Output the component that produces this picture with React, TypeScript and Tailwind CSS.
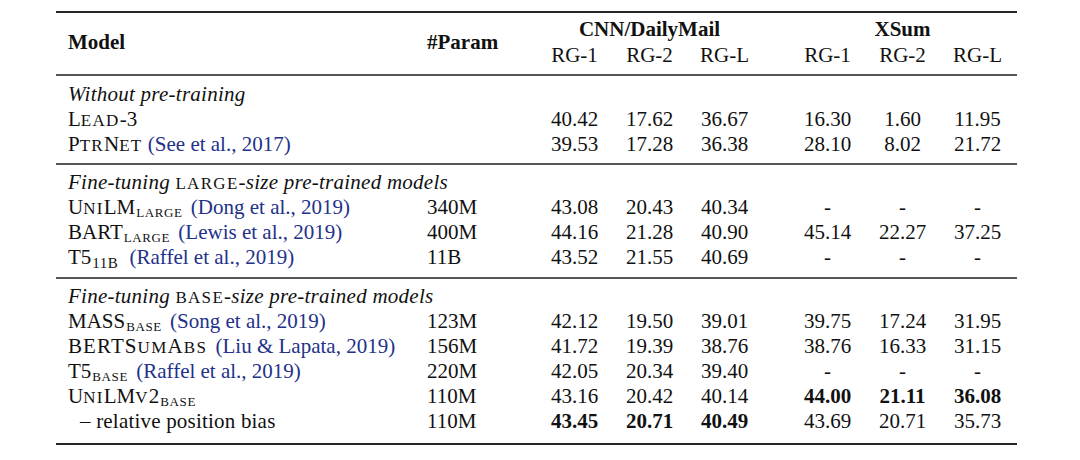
import type { ReactNode } from "react";

// small caps: lowercase runs become smaller uppercase letters
function Sc({ text }: { text: string }) {
  const parts = text.match(/[a-z]+|[^a-z]+/g) ?? [];
  return (
    <>
      {parts.map((p, i) =>
        /[a-z]/.test(p) ? (
          <span key={i} className="text-[17px] uppercase tracking-[1.3px]">
            {p}
          </span>
        ) : (
          <span key={i}>{p}</span>
        ),
      )}
    </>
  );
}

function Sub({ children }: { children: string }) {
  return (
    <span className="ml-px mr-[3px] align-[-3px] text-[13px] uppercase tracking-[0.6px]">{children}</span>
  );
}

function Cite({ children }: { children: ReactNode }) {
  return <span className="text-[#23318a]">{children}</span>;
}

function B({ children }: { children: ReactNode }) {
  return <span className="font-bold">{children}</span>;
}

function Nums({ values }: { values: ReactNode[] }) {
  return (
    <div className="flex">
      {values.map((v, i) => (
        <div key={i} className="w-[75px] text-center">
          {v}
        </div>
      ))}
    </div>
  );
}

function Row({
  model,
  param,
  cnn,
  xsum,
}: {
  model: ReactNode;
  param?: string;
  cnn?: ReactNode[];
  xsum?: ReactNode[];
}) {
  return (
    <div className="flex h-[25px]">
      <div className="w-[359px] whitespace-nowrap pl-3">{model}</div>
      <div className="w-[122px] pl-3">{param}</div>
      <div className="w-[225px]">{cnn && <Nums values={cnn} />}</div>
      <div className="w-[28px]" />
      <div className="w-[225px]">{xsum && <Nums values={xsum} />}</div>
    </div>
  );
}

function Section({ size }: { size?: string }) {
  return (
    <div className="h-[25px] whitespace-nowrap pl-3 italic tracking-[0.25px]">
      {size ? (
        <>
          Fine-tuning{" "}
          <span className="not-italic">
            <Sc text={size} />
          </span>
          -size pre-trained models
        </>
      ) : (
        "Without pre-training"
      )}
    </div>
  );
}

export default function App() {
  return (
    <div className="min-h-screen bg-white pt-[11px] font-['Liberation_Serif',serif] text-[21px] leading-[25px] text-[#111]">
      <div className="ml-[56px] w-[961px]">
        <div className="h-[2px] bg-[#262626]" />

        <div className="flex pb-[6px] pt-[4px]">
          <div className="flex w-[359px] items-center pl-3 font-bold">Model</div>
          <div className="flex w-[122px] items-center pl-3 font-bold">#Param</div>
          <div className="w-[225px]">
            <div className="h-[26px] text-center font-bold">CNN/DailyMail</div>
            <Nums values={["RG-1", "RG-2", "RG-L"]} />
          </div>
          <div className="w-[28px]" />
          <div className="w-[225px]">
            <div className="h-[26px] text-center font-bold">XSum</div>
            <Nums values={["RG-1", "RG-2", "RG-L"]} />
          </div>
        </div>

        <div className="h-[2px] bg-[#555]" />

        <div className="pb-[6px] pt-[6px]">
          <Section />
          <Row
            model={<Sc text="Lead-3" />}
            cnn={["40.42", "17.62", "36.67"]}
            xsum={["16.30", "1.60", "11.95"]}
          />
          <Row
            model={
              <>
                <Sc text="PtrNet" /> <Cite>(See et al., 2017)</Cite>
              </>
            }
            cnn={["39.53", "17.28", "36.38"]}
            xsum={["28.10", "8.02", "21.72"]}
          />
        </div>

        <div className="h-[2px] bg-[#555]" />

        <div className="pb-[7px] pt-[5px]">
          <Section size="large" />
          <Row
            model={
              <>
                <Sc text="UniLM" />
                <Sub>large</Sub> <Cite>(Dong et al., 2019)</Cite>
              </>
            }
            param="340M"
            cnn={["43.08", "20.43", "40.34"]}
            xsum={["-", "-", "-"]}
          />
          <Row
            model={
              <>
                BART<Sub>large</Sub> <Cite>(Lewis et al., 2019)</Cite>
              </>
            }
            param="400M"
            cnn={["44.16", "21.28", "40.90"]}
            xsum={["45.14", "22.27", "37.25"]}
          />
          <Row
            model={
              <>
                T5
                <span className="ml-px mr-[6px] align-[-4px] text-[15px] tracking-[0.5px]">11B</span>{" "}
                <Cite>(Raffel et al., 2019)</Cite>
              </>
            }
            param="11B"
            cnn={["43.52", "21.55", "40.69"]}
            xsum={["-", "-", "-"]}
          />
        </div>

        <div className="h-[2px] bg-[#555]" />

        <div className="pb-[9px] pt-[5px]">
          <Section size="base" />
          <Row
            model={
              <>
                MASS<Sub>base</Sub> <Cite>(Song et al., 2019)</Cite>
              </>
            }
            param="123M"
            cnn={["42.12", "19.50", "39.01"]}
            xsum={["39.75", "17.24", "31.95"]}
          />
          <Row
            model={
              <>
                <span className="mr-[3px] tracking-[1.1px]">
                  <Sc text="BERTSumAbs" />
                </span>{" "}
                <Cite>(Liu &amp; Lapata, 2019)</Cite>
              </>
            }
            param="156M"
            cnn={["41.72", "19.39", "38.76"]}
            xsum={["38.76", "16.33", "31.15"]}
          />
          <Row
            model={
              <>
                T5<Sub>base</Sub> <Cite>(Raffel et al., 2019)</Cite>
              </>
            }
            param="220M"
            cnn={["42.05", "20.34", "39.40"]}
            xsum={["-", "-", "-"]}
          />
          <Row
            model={
              <>
                <Sc text="UniLMv2" />
                <Sub>base</Sub>
              </>
            }
            param="110M"
            cnn={["43.16", "20.42", "40.14"]}
            xsum={[<B>44.00</B>, <B>21.11</B>, <B>36.08</B>]}
          />
          <Row
            model={<span className="pl-3 tracking-[0.2px]">– relative position bias</span>}
            param="110M"
            cnn={[<B>43.45</B>, <B>20.71</B>, <B>40.49</B>]}
            xsum={["43.69", "20.71", "35.73"]}
          />
        </div>

        <div className="h-[2px] bg-[#262626]" />
      </div>
    </div>
  );
}
